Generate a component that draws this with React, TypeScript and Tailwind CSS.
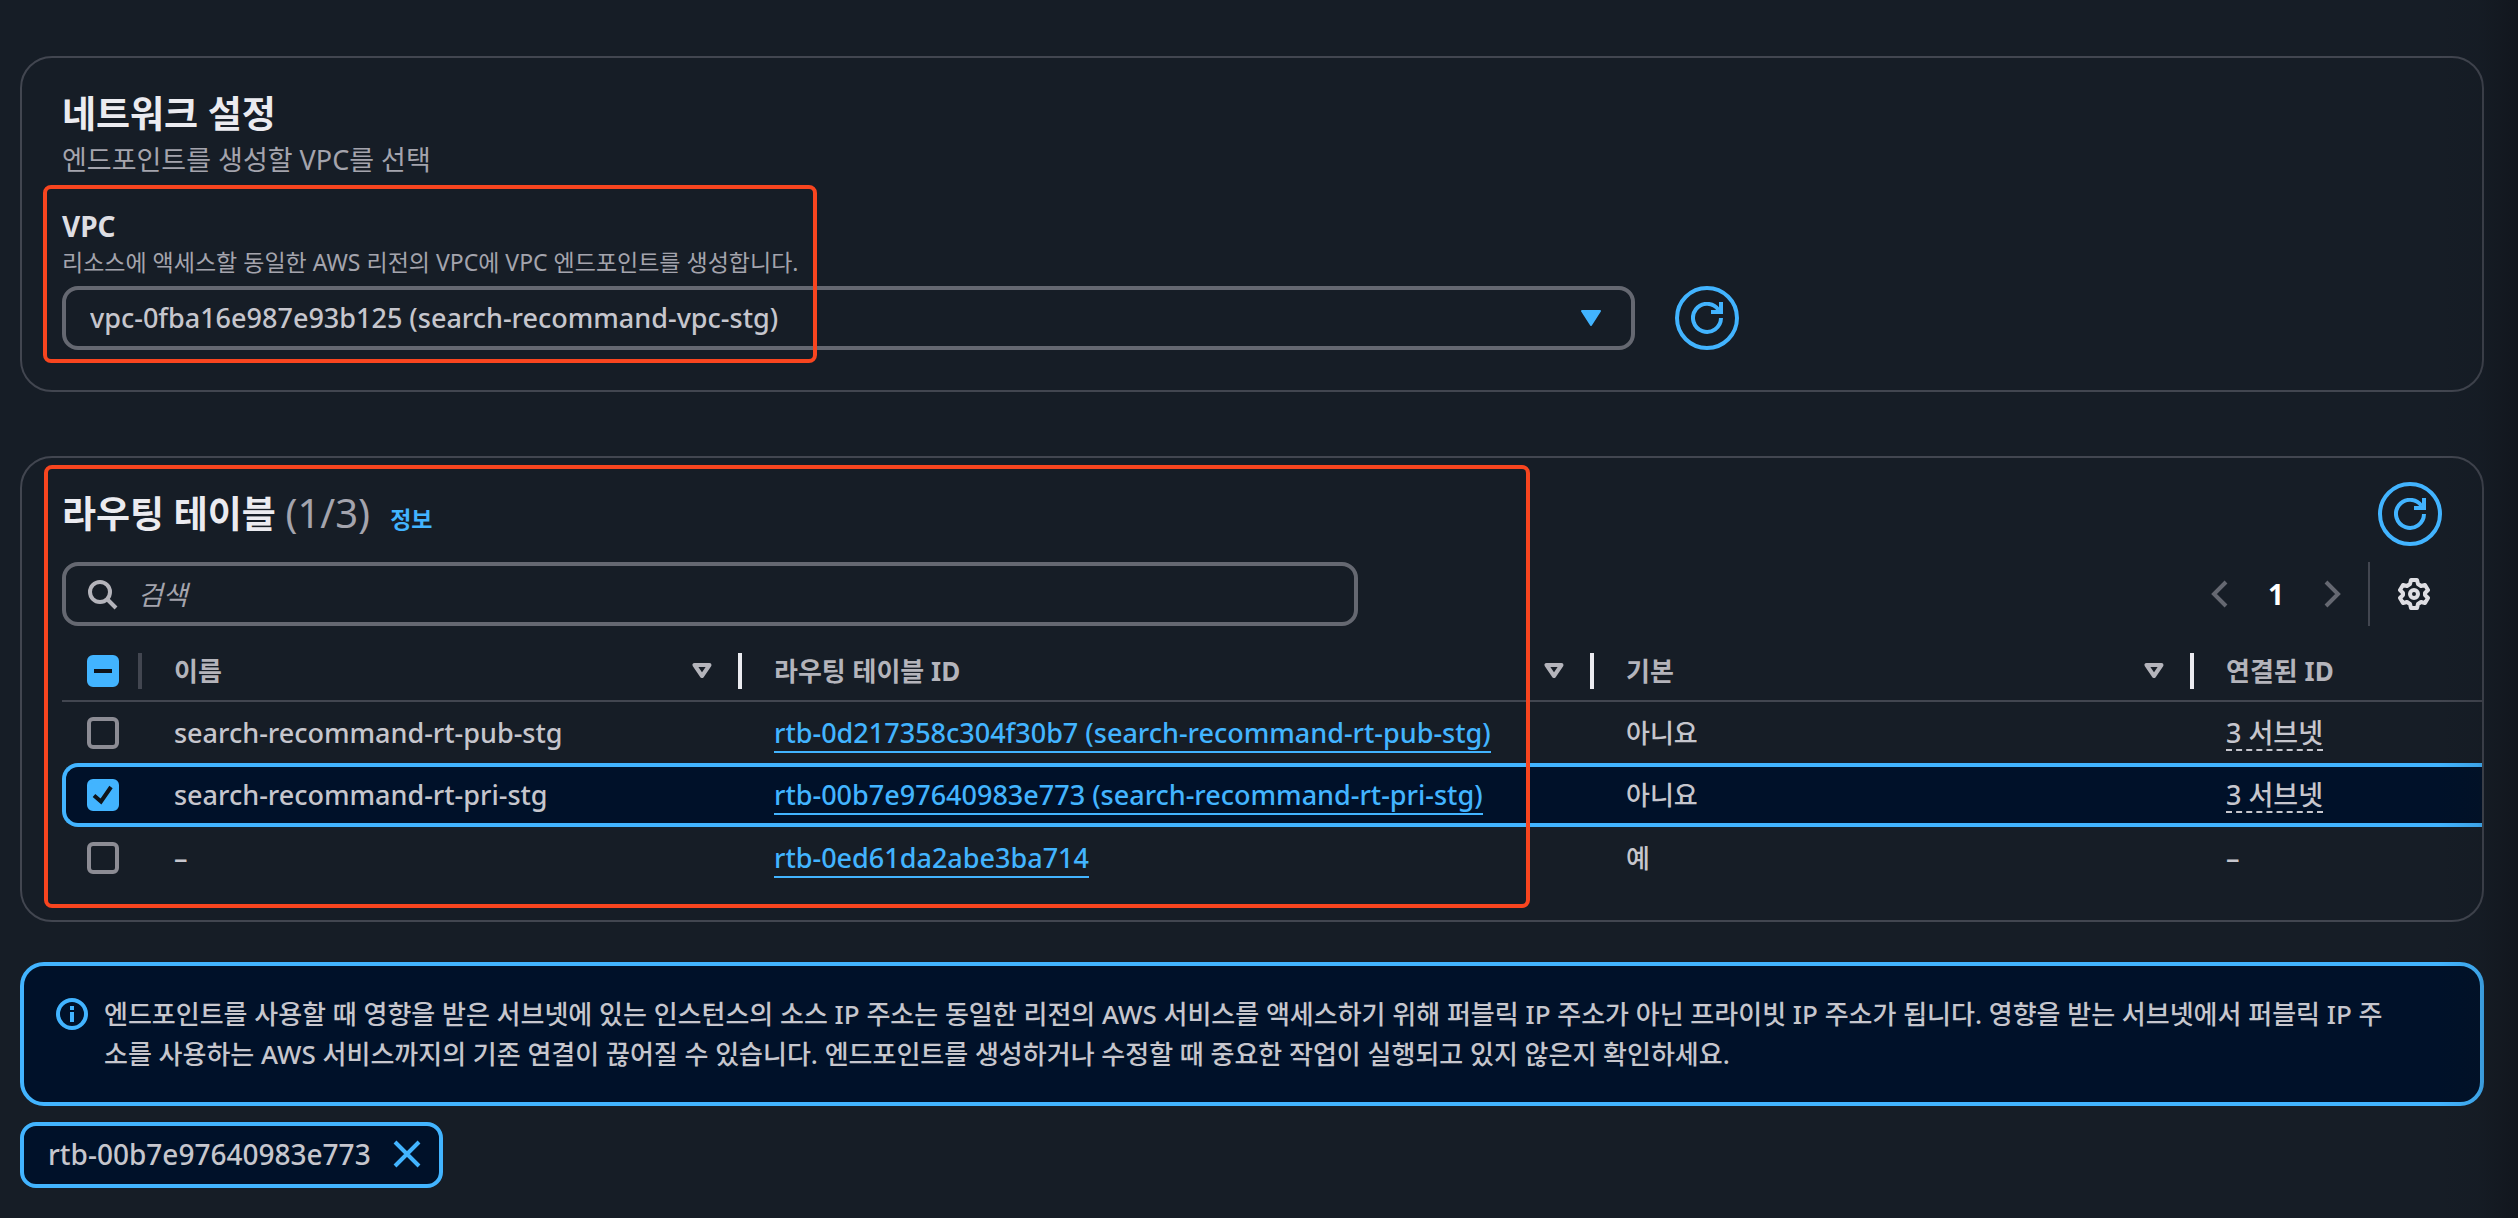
import React, { useEffect, useRef } from 'react';

interface RouteTable {
  name: string;
  id: string;
  main: string;
  subnets: string | null;
  selected?: boolean;
}

const routeTables: RouteTable[] = [
  {
    name: 'search-recommand-rt-pub-stg',
    id: 'rtb-0d217358c304f30b7 (search-recommand-rt-pub-stg)',
    main: '아니요',
    subnets: '3 서브넷',
  },
  {
    name: 'search-recommand-rt-pri-stg',
    id: 'rtb-00b7e97640983e773 (search-recommand-rt-pri-stg)',
    main: '아니요',
    subnets: '3 서브넷',
    selected: true,
  },
  { name: '–', id: 'rtb-0ed61da2abe3ba714', main: '예', subnets: null },
];

const RefreshButton: React.FC<{ label: string }> = ({ label }) => (
  <button
    type="button"
    aria-label={label}
    className="flex h-16 w-16 shrink-0 items-center justify-center rounded-full border-4 border-[#42b4ff] text-[#42b4ff]"
  >
    <svg className="h-8 w-8" viewBox="0 0 16 16" fill="none" stroke="currentColor" strokeWidth="2">
      <path d="M10 5h5V0" />
      <path d="M15 8a7 7 0 1 1-1.2-4" />
    </svg>
  </button>
);

interface CheckboxProps {
  label: string;
  checked?: boolean;
  indeterminate?: boolean;
}

const Checkbox: React.FC<CheckboxProps> = ({ label, checked = false, indeterminate = false }) => {
  const ref = useRef<HTMLInputElement>(null);

  useEffect(() => {
    if (ref.current) ref.current.indeterminate = indeterminate;
  }, [indeterminate]);

  return (
    <span className="relative block h-8 w-8">
      <input
        ref={ref}
        type="checkbox"
        aria-label={label}
        defaultChecked={checked}
        className="block h-8 w-8 appearance-none rounded-md border-4 border-[#8c8c94] checked:border-[#42b4ff] checked:bg-[#42b4ff] indeterminate:border-[#42b4ff] indeterminate:bg-[#42b4ff]"
      />
      {(checked || indeterminate) && (
        <svg
          className="pointer-events-none absolute inset-0 h-8 w-8"
          viewBox="0 0 32 32"
          fill="none"
          stroke="#0f141a"
          strokeWidth="4"
        >
          <path d={indeterminate ? 'M7 16h18' : 'M7 16.5l7 6L24 8'} />
        </svg>
      )}
    </span>
  );
};

const HeaderCell: React.FC<{ children: React.ReactNode; filter?: boolean }> = ({ children, filter = true }) => (
  <th scope="col" className="h-15 border-b-2 border-[#424650] p-0 text-left font-bold text-[#b4b4bb]">
    <div className="flex items-center pl-8">
      <span className="flex-1">{children}</span>
      {filter && (
        <>
          <button type="button" aria-label="정렬" className="mr-[26px]">
            <svg className="h-4 w-5" viewBox="0 0 20 16" fill="none" stroke="currentColor" strokeWidth="4" strokeLinejoin="round">
              <path d="M2.5 2h15L10 13z" />
            </svg>
          </button>
          <span className="h-9 w-1 bg-[#ebebf0]" />
        </>
      )}
    </div>
  </th>
);

const NetworkPanel: React.FC = () => (
  <section className="relative rounded-[32px] border-2 border-[#424650] px-10 pt-8 pb-10">
    <h2 className="text-[37px] leading-12 font-bold text-[#ebebf0]">네트워크 설정</h2>
    <p className="text-[27px] leading-11 text-[#a4a4ad]">엔드포인트를 생성할 VPC를 선택</p>
    <label htmlFor="vpc" className="mt-6 block text-[28px] leading-10 font-bold text-[#dedee3]">
      VPC
    </label>
    <p className="text-[23px] leading-8 text-[#a4a4ad]">
      리소스에 액세스할 동일한 AWS 리전의 VPC에 VPC 엔드포인트를 생성합니다.
    </p>
    <div className="mt-2 grid grid-cols-12 gap-10">
      <div className="relative col-span-8">
        <select
          id="vpc"
          className="block h-16 w-full appearance-none rounded-2xl border-4 border-[#656871] pr-16 pl-6 text-[27px] font-medium text-[#c6c6cd]"
        >
          <option>vpc-0fba16e987e93b125 (search-recommand-vpc-stg)</option>
        </select>
        <svg
          className="pointer-events-none absolute top-6 right-[34px] h-4 w-5 text-[#42b4ff]"
          viewBox="0 0 20 16"
          fill="currentColor"
          stroke="currentColor"
          strokeWidth="2"
          strokeLinejoin="round"
        >
          <path d="M1 1h18l-9 14z" />
        </svg>
      </div>
      <RefreshButton label="VPC 새로 고침" />
    </div>
    <div className="pointer-events-none absolute top-[127px] left-[21px] h-[178px] w-[774px] rounded-lg border-4 border-[#f8451f]" />
  </section>
);

const RouteTablePanel: React.FC = () => (
  <section className="relative mt-16 rounded-[32px] border-2 border-[#424650] pt-6 pb-8 pl-10">
    <div className="flex items-center justify-between pr-10">
      <div className="flex items-baseline">
        <h2 className="text-[37px] leading-12 font-bold text-[#ebebf0]">
          라우팅 테이블 <span className="text-[40px] leading-10 font-normal text-[#a4a4ad]">(1/3)</span>
        </h2>
        <a href="#info" className="ml-5 text-[23px] font-bold text-[#42b4ff]">
          정보
        </a>
      </div>
      <RefreshButton label="라우팅 테이블 새로 고침" />
    </div>

    <div className="mt-4 flex items-center justify-between pr-10">
      <div className="relative w-[1296px]">
        <svg
          className="pointer-events-none absolute top-4 left-6 h-8 w-8 text-[#b4b4bb]"
          viewBox="0 0 16 16"
          fill="none"
          stroke="currentColor"
          strokeWidth="2"
        >
          <circle cx="7" cy="7" r="5" />
          <path d="M10.5 10.5L15 15" />
        </svg>
        <input
          type="text"
          aria-label="검색"
          placeholder="검색"
          className="block h-16 w-full rounded-2xl border-4 border-[#656871] pr-6 pl-[72px] text-[27px] text-[#c6c6cd] placeholder:text-[#a4a4ad] placeholder:italic"
        />
      </div>
      <div className="flex items-center">
        <button type="button" aria-label="이전 페이지" className="text-[#656871]">
          <svg className="h-8 w-8" viewBox="0 0 16 16" fill="none" stroke="currentColor" strokeWidth="2">
            <path d="M11 2L5 8l6 6" />
          </svg>
        </button>
        <button type="button" aria-current="page" className="w-20 text-center text-[28px] font-bold text-white">
          1
        </button>
        <button type="button" aria-label="다음 페이지" className="text-[#656871]">
          <svg className="h-8 w-8" viewBox="0 0 16 16" fill="none" stroke="currentColor" strokeWidth="2">
            <path d="M5 2l6 6-6 6" />
          </svg>
        </button>
        <span className="ml-5 h-16 w-0.5 bg-[#424650]" />
        <button type="button" aria-label="기본 설정" className="mr-3 ml-7 text-[#dedee3]">
          <svg className="h-8 w-8" viewBox="0 0 32 32" fill="none" stroke="currentColor" strokeWidth="4" strokeLinejoin="round">
            <path d="M13 2h6l1 4 3 2 4-1 3 5-3 3v2l3 3-3 5-4-1-3 2-1 4h-6l-1-4-3-2-4 1-3-5 3-3v-2l-3-3 3-5 4 1 3-2z" />
            <circle cx="16" cy="16" r="4" />
          </svg>
        </button>
      </div>
    </div>

    <table className="mt-4 w-full table-fixed border-separate border-spacing-0 text-[27px] leading-10 font-medium text-[#c6c6cd]">
      <colgroup>
        <col className="w-20" />
        <col className="w-[600px]" />
        <col className="w-[852px]" />
        <col className="w-[600px]" />
        <col />
      </colgroup>
      <thead className="text-[26px]">
        <tr>
          <th scope="col" className="h-15 border-b-2 border-[#424650] p-0">
            <div className="flex items-center justify-between pl-[25px]">
              <Checkbox label="모두 선택" indeterminate />
              <span className="h-9 w-1 bg-[#424650]" />
            </div>
          </th>
          <HeaderCell>이름</HeaderCell>
          <HeaderCell>라우팅 테이블 ID</HeaderCell>
          <HeaderCell>기본</HeaderCell>
          <HeaderCell filter={false}>연결된 ID</HeaderCell>
        </tr>
      </thead>
      <tbody>
        {routeTables.map((row) => {
          const cell = row.selected
            ? 'h-16 border-y-4 border-[#42b4ff] bg-[#001129] py-0 pr-0'
            : 'h-[61px] py-0 pr-0';
          return (
            <tr key={row.id}>
              <td className={`${cell} ${row.selected ? 'rounded-l-2xl border-l-4 pl-[21px]' : 'pl-[25px]'}`}>
                <Checkbox label={row.name} checked={row.selected} />
              </td>
              <td className={`${cell} pl-8`}>{row.name}</td>
              <td className={`${cell} pl-8`}>
                <a href="#route-table" className="border-b-2 border-[#42b4ff] text-[#42b4ff]">
                  {row.id}
                </a>
              </td>
              <td className={`${cell} pl-8 text-[26px]`}>{row.main}</td>
              <td className={`${cell} pl-8`}>
                {row.subnets ? (
                  <button type="button" className="border-b-2 border-dashed border-[#c6c6cd] leading-8">
                    {row.subnets}
                  </button>
                ) : (
                  '–'
                )}
              </td>
            </tr>
          );
        })}
      </tbody>
    </table>
    <div className="pointer-events-none absolute top-[7px] left-[22px] h-[443px] w-[1486px] rounded-lg border-4 border-[#f8451f]" />
  </section>
);

const App: React.FC = () => (
  <main className="relative min-h-screen bg-[#161d26] pt-14 pr-[34px] pb-4 pl-5 font-['Noto_Sans','Noto_Sans_CJK_KR',sans-serif]">
    <NetworkPanel />
    <RouteTablePanel />

    <div className="mt-10 flex gap-4 rounded-3xl border-4 border-[#42b4ff] bg-[#001129] py-7 pr-20 pl-8">
      <svg className="mt-1 h-8 w-8 shrink-0 text-[#42b4ff]" viewBox="0 0 16 16" fill="none" stroke="currentColor" strokeWidth="2">
        <circle cx="8" cy="8" r="7" />
        <path d="M8 7v5M8 4v2" />
      </svg>
      <p className="text-[26px] leading-10 font-medium text-[#c6c6cd]">
        엔드포인트를 사용할 때 영향을 받은 서브넷에 있는 인스턴스의 소스 IP 주소는 동일한 리전의 AWS 서비스를 액세스하기 위해 퍼블릭 IP 주소가 아닌 프라이빗 IP 주소가 됩니다. 영향을 받는 서브넷에서 퍼블릭 IP 주소를 사용하는 AWS 서비스까지의 기존 연결이 끊어질 수 있습니다. 엔드포인트를 생성하거나 수정할 때 중요한 작업이 실행되고 있지 않은지 확인하세요.
      </p>
    </div>

    <div className="mt-4 flex w-fit items-center gap-5 rounded-2xl border-4 border-[#42b4ff] bg-[#001129] pt-2 pr-4 pb-2.5 pl-6 text-[28px] leading-10 font-medium text-[#c6c6cd]">
      rtb-00b7e97640983e773
      <button type="button" aria-label="제거" className="text-[#42b4ff]">
        <svg className="block h-8 w-8" viewBox="0 0 16 16" fill="none" stroke="currentColor" strokeWidth="2">
          <path d="M2 2l12 12M14 2L2 14" />
        </svg>
      </button>
    </div>

    <div className="pointer-events-none absolute inset-y-0 right-0 w-20 bg-linear-to-r from-transparent via-[#0f1218]/10 to-[#0f1218]/60" />
  </main>
);

export default App;
